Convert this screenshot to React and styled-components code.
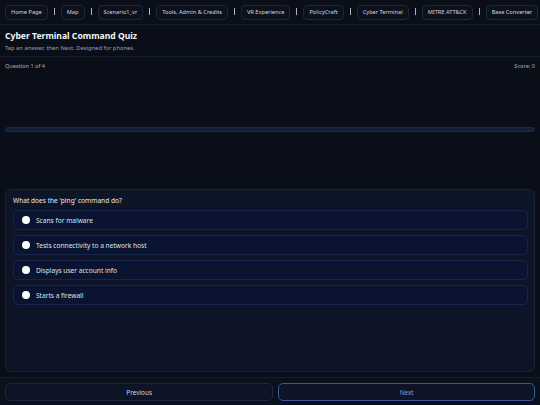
import { Fragment } from "react";
import styled, { createGlobalStyle } from "styled-components";

const Global = createGlobalStyle`
  html, body {
    margin: 0;
    padding: 0;
    background: #0a0e19;
  }
  * {
    box-sizing: border-box;
  }
`;

const Page = styled.div`
  height: 100vh;
  display: flex;
  flex-direction: column;
  background: #0a0e19;
  font-family: "Noto Sans", "Open Sans", sans-serif;
  color: #dfe4ee;
  overflow: hidden;
`;

const Nav = styled.nav`
  height: 25px;
  flex: none;
  display: flex;
  align-items: center;
  gap: 6px;
  padding: 0 5px;
  border-bottom: 1px solid #161d2b;
  white-space: nowrap;
  overflow: hidden;
`;

const NavButton = styled.button`
  flex: none;
  height: 15px;
  padding: 0 5px;
  border: 1px solid #1e2738;
  border-radius: 4px;
  background: #0c111c;
  color: #d0d7e4;
  font-family: inherit;
  font-size: 5.65px;
  line-height: 13px;
`;

const Sep = styled.span`
  flex: none;
  width: 1px;
  height: 7px;
  margin-top: -2px;
  background: #aab2c0;
`;

const Header = styled.header`
  height: 32px;
  flex: none;
  padding: 5px 5px 0;
  border-bottom: 1px solid #161d2b;
`;

const Title = styled.h1`
  margin: 0;
  font-size: 8.6px;
  line-height: 12px;
  font-weight: 700;
  color: #f1f4f9;
`;

const Subtitle = styled.p`
  margin: 0;
  font-size: 5.8px;
  line-height: 12px;
  color: #97a1b3;
`;

const Main = styled.main`
  flex: 1;
  display: flex;
  flex-direction: column;
  padding: 4px 5px 5px;
  min-height: 0;
`;

const Meta = styled.div`
  display: flex;
  justify-content: space-between;
  height: 10px;
  font-size: 5.6px;
  line-height: 10px;
  color: #a7b0bf;
`;

const Progress = styled.div`
  margin-top: 56px;
  height: 5px;
  border: 1px solid #1c2946;
  border-radius: 3px;
  background: #132039;
`;

const Card = styled.section`
  flex: 1;
  margin-top: 57px;
  padding: 6px 6px 6px 7px;
  border: 1px solid #18223a;
  border-radius: 6px;
  background: linear-gradient(180deg, #0d1529 0%, #0d1427 100%);
`;

const Question = styled.div`
  font-size: 6.6px;
  line-height: 10px;
  color: #e6eaf1;
  margin-bottom: 4px;
`;

const Options = styled.div`
  display: flex;
  flex-direction: column;
  gap: 5px;
`;

const Option = styled.label`
  display: flex;
  align-items: center;
  gap: 6px;
  height: 20px;
  padding: 0 8px;
  border: 1px solid #17254a;
  border-radius: 5px;
  background: #0a1430;
  font-size: 6.6px;
  color: #dde3ee;
`;

const Radio = styled.span`
  flex: none;
  width: 8px;
  height: 8px;
  border-radius: 50%;
  background: #ffffff;
`;

const Footer = styled.footer`
  flex: none;
  display: flex;
  gap: 5px;
  height: 28px;
  padding: 5px;
  border-top: 1px solid #151c2a;
  background: #0b101c;
`;

const FootButton = styled.button`
  flex: 1 1 auto;
  height: 18px;
  border: 1px solid ${(p) => (p.$primary ? "#3b5896" : "#1b2640")};
  border-radius: 5px;
  background: #0c1426;
  color: ${(p) => (p.$primary ? "#7b9de6" : "#d3d9e4")};
  font-family: inherit;
  font-size: 6.4px;
`;

const links = [
  "Home Page",
  "Map",
  "Scenario1_vr",
  "Tools, Admin & Credits",
  "VR Experience",
  "PolicyCraft",
  "Cyber Terminal",
  "MITRE ATT&CK",
  "Base Converter",
];

const answers = [
  "Scans for malware",
  "Tests connectivity to a network host",
  "Displays user account info",
  "Starts a firewall",
];

export default function App() {
  return (
    <Page>
      <Global />
      <Nav>
        {links.map((l, i) => (
          <Fragment key={l}>
            {i > 0 && <Sep />}
            <NavButton>{l}</NavButton>
          </Fragment>
        ))}
      </Nav>
      <Header>
        <Title>Cyber Terminal Command Quiz</Title>
        <Subtitle>Tap an answer, then Next. Designed for phones.</Subtitle>
      </Header>
      <Main>
        <Meta>
          <span>Question 1 of 4</span>
          <span>Score: 0</span>
        </Meta>
        <Progress />
        <Card>
          <Question>What does the 'ping' command do?</Question>
          <Options>
            {answers.map((a) => (
              <Option key={a}>
                <Radio />
                {a}
              </Option>
            ))}
          </Options>
        </Card>
      </Main>
      <Footer>
        <FootButton>Previous</FootButton>
        <FootButton $primary>Next</FootButton>
      </Footer>
    </Page>
  );
}
